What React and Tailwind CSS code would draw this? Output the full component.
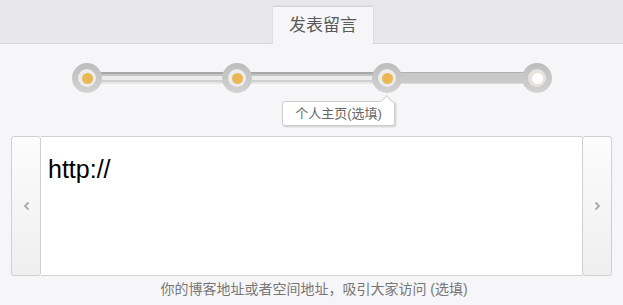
import React from 'react'

const font = { fontFamily: '"Liberation Sans", "Noto Sans CJK SC", sans-serif' }

const Dot = ({ done }) => (
    <div className="w-[30px] h-[30px] shrink-0 rounded-full bg-[linear-gradient(to_bottom,#bdbdbd,#d2d2d2)] flex items-center justify-center relative z-10">
        <div className={"w-[18px] h-[18px] rounded-full flex items-center justify-center " + (done ? "bg-[#ececec]" : "bg-[#e4e4e4]")}>
            {done
                ? <div className="w-[11px] h-[11px] rounded-full bg-[#ebb655]"></div>
                : <div className="w-[11px] h-[11px] rounded-full bg-white shadow-[0_0_3px_#f3e2b8]"></div>}
        </div>
    </div>
)

const Track = ({ done }) => (
    <div className={"w-[124px] h-[12px] -mx-[2px] shrink-0 " + (done
        ? "bg-[linear-gradient(to_bottom,#a8a8a8_0,#a8a8a8_2px,#c4c4c4_2px,#c4c4c4_4px,#ececec_4px,#ececec_8px,#cfcfcf_8px,#cfcfcf_10px,#e6e6e6_10px)]"
        : "bg-[linear-gradient(to_bottom,#b0b0b0_0,#b0b0b0_1px,#c9c9c9_1px,#c9c9c9_11px,#dedede_11px)]")}></div>
)

const Chevron = ({ dir }) => (
    <svg width="7" height="10" viewBox="0 0 7 10">
        <path d={dir === 'left' ? "M5.5 1.5 L2 5 L5.5 8.5" : "M1.5 1.5 L5 5 L1.5 8.5"} fill="none" stroke="#aaa" strokeWidth="1.8" />
    </svg>
)

export default function App() {
    return (
        <div className="w-[623px] h-[305px] bg-[#f6f6f8] overflow-hidden" style={font}>
            {/* header */}
            <div className="h-[44px] bg-[#e8e8ea] border-b border-[#d6d6d6] flex items-end">
                <div className="ml-[273px] w-[100px] h-[37px] -mb-[1px] bg-[#f6f6f8] shadow-[0_-1px_2px_rgba(0,0,0,0.12)] flex items-center justify-center text-[17px] text-[#5a5a5a]">
                    发表留言
                </div>
            </div>

            {/* steps */}
            <div className="mt-[19px] ml-[72px] flex items-center">
                <Dot done />
                <Track done />
                <Dot done />
                <Track done />
                <Dot done />
                <Track />
                <Dot />
            </div>

            <div className="mt-[8px] ml-[282px] relative w-[113px] h-[25px] bg-white border border-[#cfcfcf] rounded-[3px] shadow-[1px_1px_2px_rgba(0,0,0,0.18)] flex items-center justify-center text-[13px] text-[#666]">
                个人主页(选填)
                <div className="absolute -top-[5px] right-[3px] w-[9px] h-[9px] bg-white border-l border-t border-[#cfcfcf] rotate-45"></div>
            </div>

            {/* input area */}
            <div className="mt-[10px] mx-[11px] h-[140px] flex">
                <div className="w-[30px] shrink-0 rounded-[3px] border border-[#d0d0d0] bg-[linear-gradient(to_bottom,#fcfcfc,#efeff0)] flex items-center justify-center">
                    <Chevron dir="left" />
                </div>
                <div className="flex-1 bg-white border-t border-b border-[#d3d3d3] pl-[7px] pt-[20px] text-[25px] text-black leading-none">
                    http://
                </div>
                <div className="w-[30px] shrink-0 rounded-[3px] border border-[#d0d0d0] bg-[linear-gradient(to_bottom,#fcfcfc,#efeff0)] flex items-center justify-center">
                    <Chevron dir="right" />
                </div>
            </div>

            <div className="mt-[3px] text-center text-[14px] text-[#777] pl-[5px]">
                你的博客地址或者空间地址，吸引大家访问 (选填)
            </div>
        </div>
    )
}
